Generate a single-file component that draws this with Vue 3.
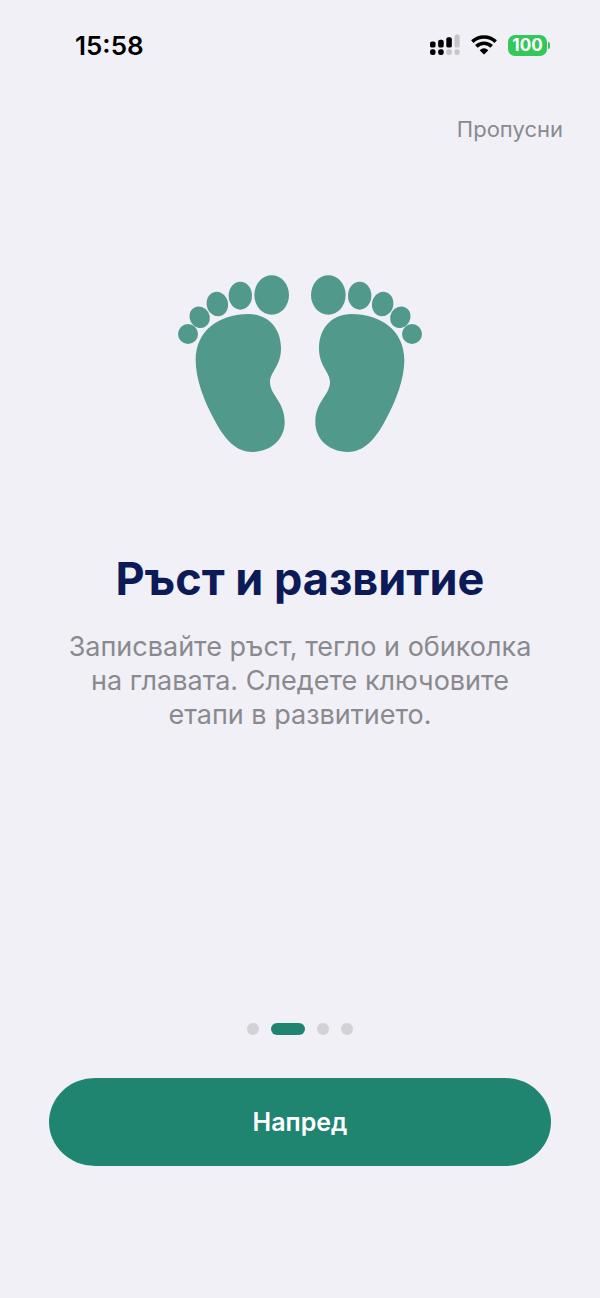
<template>
  <div class="screen" lang="bg">
    <header class="status-bar">
      <time class="clock">15:58</time>
      <div class="status-icons">
        <svg class="signal" viewBox="0 0 92 66" aria-hidden="true">
          <g>
            <rect x="0" y="22" width="17" height="19" rx="6" />
            <rect x="25" y="17" width="17" height="24" rx="6" />
            <rect x="50" y="9" width="17" height="32" rx="6" />
            <rect class="off" x="75" y="1" width="16" height="40" rx="6" />
            <rect x="0" y="46" width="17" height="18" rx="7" />
            <rect x="25" y="46" width="17" height="18" rx="7" />
            <rect class="off" x="50" y="46" width="17" height="18" rx="7" />
            <rect class="off" x="75" y="46" width="16" height="18" rx="7" />
          </g>
        </svg>
        <svg class="wifi" viewBox="0 0 78 60" aria-hidden="true">
          <path class="arc" d="M4 20 A51 51 0 0 1 74 20" />
          <path class="arc" d="M16 34 A33 33 0 0 1 62 34" />
          <path d="M26 46 Q39 34 52 46 L41 57 Q39 59 37 57 Z" />
        </svg>
        <div class="battery">
          <span class="battery-level">100</span>
          <span class="battery-cap"></span>
        </div>
      </div>
    </header>

    <div class="top-actions">
      <button type="button" class="skip" @click="skip">Пропусни</button>
    </div>

    <main class="slide">
      <svg class="feet" viewBox="39 30 732 534" aria-hidden="true">
        <g v-for="side in feet" :key="side.name" :transform="side.transform">
          <ellipse cx="320" cy="90" rx="52" ry="59" />
          <ellipse cx="226" cy="92" rx="35" ry="42" />
          <ellipse cx="157" cy="117" rx="32" ry="37" transform="rotate(-12 157 117)" />
          <ellipse cx="104" cy="157" rx="30" ry="33" transform="rotate(-30 104 157)" />
          <ellipse cx="69" cy="207" rx="30" ry="30" />
          <path
            d="M250 147 C310 147 348 190 348 250 C348 305 315 320 315 352 C315 390 359 410 359 472 C359 525 315 561 262 561 C215 561 180 525 150 468 C115 405 92 340 92 285 C92 195 165 147 250 147 Z"
          />
        </g>
      </svg>
      <h1 class="title">{{ title }}</h1>
      <p class="description">{{ description }}</p>
    </main>

    <footer class="footer">
      <div class="dots">
        <span
          v-for="n in total"
          :key="n"
          class="dot"
          :class="{ active: n === step }"
        ></span>
      </div>
      <button type="button" class="next" @click="next">Напред</button>
    </footer>
  </div>
</template>

<script setup>
import { ref } from 'vue';

const total = 4;
const step = ref(2);

const title = 'Ръст и развитие';
const description =
  'Записвайте ръст, тегло и обиколка на главата. Следете ключовите етапи в развитието.';

// the right foot is the left one mirrored
const feet = [
  { name: 'left', transform: 'translate(0 0)' },
  { name: 'right', transform: 'translate(810 0) scale(-1 1)' }
];

function next() {
  if (step.value < total) {
    step.value++;
  }
}

function skip() {
  step.value = total;
}
</script>

<style>
body {
  margin: 0;
  background-color: #f1f0f6;
}
</style>

<style scoped>
.screen {
  display: flex;
  flex-direction: column;
  min-height: 100vh;
  box-sizing: border-box;
  padding-bottom: 132px;
  background-color: #f1f0f6;
  font-family: Inter, "Noto Sans", sans-serif;
}

.status-bar {
  display: flex;
  justify-content: space-between;
  align-items: center;
  height: 90px;
  padding: 0 50px 0 75px;
}

.clock {
  font-size: 26px;
  font-weight: 600;
  color: #000;
}

.status-icons {
  display: flex;
  align-items: center;
  gap: 11px;
}

.signal {
  width: 30px;
  height: 22px;
}

.off {
  fill: #c6c6c9;
}

.wifi {
  width: 26px;
  height: 20px;
}

.arc {
  fill: none;
  stroke: #000;
  stroke-width: 11;
}

.battery {
  display: flex;
  align-items: center;
  gap: 1px;
}

.battery-level {
  width: 39px;
  height: 21px;
  border-radius: 7px;
  background-color: #35c759;
  color: #fff;
  font-size: 17px;
  font-weight: 700;
  line-height: 21px;
  text-align: center;
}

.battery-cap {
  width: 2px;
  height: 7px;
  border-radius: 0 2px 2px 0;
  background-color: #35c759;
}

.top-actions {
  display: flex;
  justify-content: flex-end;
  padding: 23px 37px 0;
}

.skip {
  padding: 0;
  border: none;
  background: none;
  color: #8a8a8e;
  font-family: inherit;
  font-size: 22px;
  line-height: 32px;
  cursor: pointer;
}

.slide {
  display: flex;
  flex-direction: column;
  align-items: center;
  flex: 1;
  padding: 130px 48px 0;
}

.feet {
  width: 244px;
  height: 178px;
  fill: #50998b;
}

.title {
  margin: 100px 0 0;
  color: #0c1b58;
  font-size: 45px;
  font-weight: 700;
  line-height: 52px;
  text-align: center;
}

.description {
  max-width: 480px;
  margin: 25px 0 0;
  color: #8a8a8e;
  font-size: 27px;
  line-height: 34px;
  text-align: center;
}

.footer {
  display: flex;
  flex-direction: column;
  gap: 43px;
  padding: 0 49px;
}

.dots {
  display: flex;
  justify-content: center;
  gap: 12px;
}

.dot {
  width: 12px;
  height: 12px;
  border-radius: 6px;
  background-color: #d1d1d6;
}

.dot.active {
  width: 34px;
  background-color: #208570;
}

.next {
  width: 100%;
  height: 88px;
  border: none;
  border-radius: 46px / 44px;
  background-color: #208570;
  color: #fff;
  font-family: inherit;
  font-size: 25px;
  font-weight: 600;
  cursor: pointer;
}
</style>
